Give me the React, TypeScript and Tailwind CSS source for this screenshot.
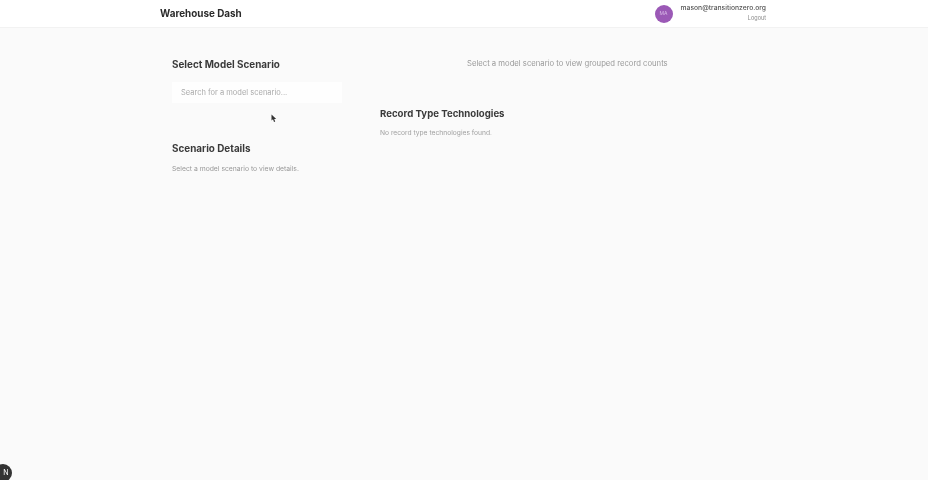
export default function App() {
  return (
    <div className="relative h-[480px] w-[928px] overflow-hidden bg-[#fafafa] font-['Inter',sans-serif] blur-[0.5px]">
      {/* Header */}
      <header className="flex h-[28px] items-center justify-between border-b border-[#f2f2f2] bg-white pl-[160px] pr-[162px]">
        <span className="text-[9.9px] font-bold text-[#2b2b2b]">Warehouse Dash</span>
        <div className="flex items-center gap-[8px]">
          <div className="flex h-[18px] w-[18px] items-center justify-center rounded-full bg-[#9b59b6] text-[5px] text-[#d8b8e6]">
            MA
          </div>
          <div className="mb-[3px] flex flex-col items-end">
            <span className="text-[6.75px] leading-[10px] font-medium text-[#555]">mason@transitionzero.org</span>
            <span className="mt-[1px] text-[5.5px] leading-[8px] text-[#888]">Logout</span>
          </div>
        </div>
      </header>

      <main className="flex pl-[172px] pt-[30px]">
        {/* Left column */}
        <div className="w-[208px] shrink-0">
          <h2 className="text-[9.9px] leading-[13px] font-bold text-[#3a3a3a]">Select Model Scenario</h2>
          <div className="mt-[11px] flex h-[21px] w-[170px] items-center bg-[#fefefe] pl-[9px] text-[7.5px] text-[#aaa]">
            Search for a model scenario...
          </div>
          <h2 className="mt-[39px] text-[9.9px] leading-[13px] font-bold text-[#3a3a3a]">Scenario Details</h2>
          <p className="mt-[9px] text-[6.8px] leading-[9px] text-[#999]">Select a model scenario to view details.</p>
        </div>

        {/* Right column */}
        <div className="flex-1">
          <p className="mt-[1px] ml-[87px] text-[7.7px] leading-[10px] text-[#9a9a9a]">
            Select a model scenario to view grouped record counts
          </p>
          <h2 className="mt-[38px] text-[9.65px] leading-[13px] font-bold text-[#3a3a3a]">Record Type Technologies</h2>
          <p className="mt-[9px] text-[6.7px] leading-[9px] text-[#a0a0a0]">No record type technologies found.</p>
        </div>
      </main>

      {/* Cursor */}
      <svg className="absolute left-[271px] top-[114px]" width="6" height="9" viewBox="0 0 6 9">
        <path d="M0.5 0.5 L0.5 6.5 L2 5.2 L3 8 L4.2 7.5 L3.2 5 L5.2 5 Z" fill="#333" />
      </svg>

      {/* Dev indicator */}
      <div className="absolute left-[-6px] top-[464px] flex h-[18px] w-[18px] items-center justify-center rounded-full bg-[#333] pl-[6px] text-[7px] text-white">
        N
      </div>
    </div>
  );
}
